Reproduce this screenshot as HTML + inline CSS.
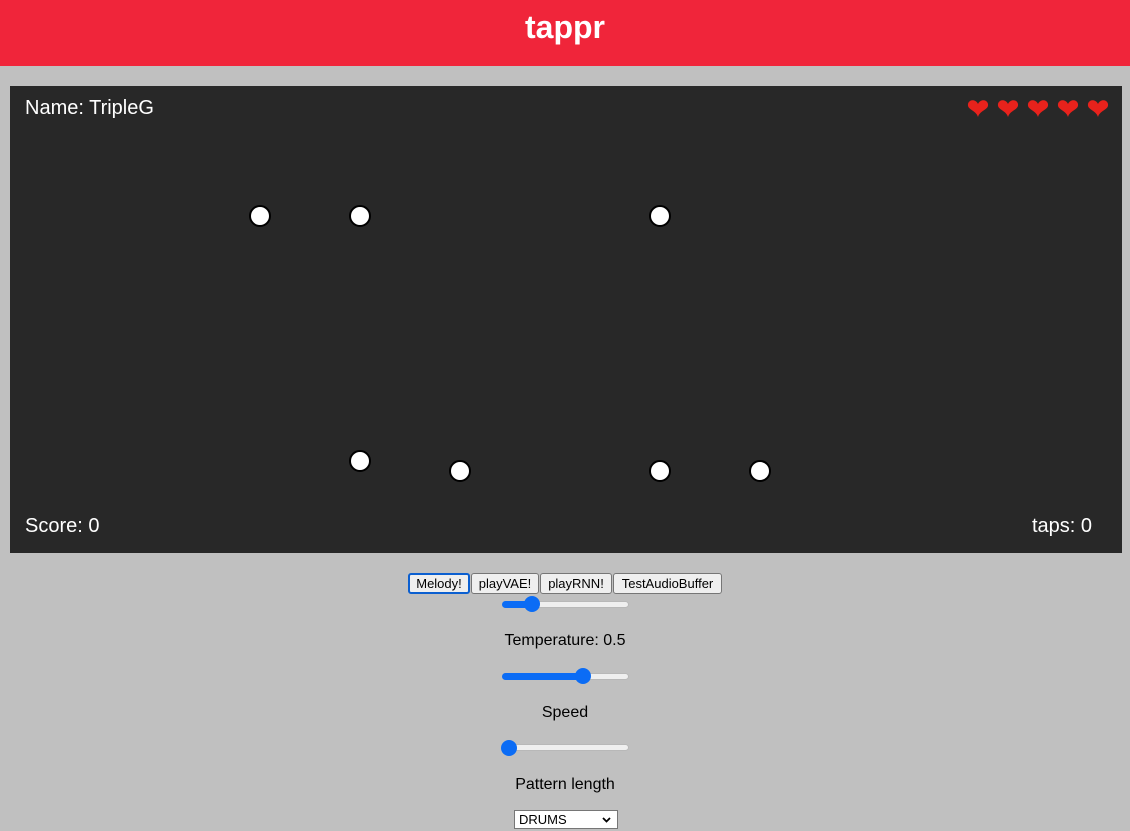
<!DOCTYPE html><html><head><style>
*{margin:0;padding:0;box-sizing:border-box}
body{width:1130px;height:831px;background:#c0c0c0;font-family:"Liberation Sans",sans-serif;position:relative;overflow:hidden}
.a{position:absolute}
.hdr{left:0;top:0;width:1130px;height:66px;background:#f0253a;color:#fff;font-weight:bold;font-size:32px;text-align:center;line-height:54px}
.game{left:10px;top:86px;width:1112px;height:467px;background:#282828}
.t{color:#fff;font-size:20px}
.dot{width:22px;height:22px;border-radius:50%;background:#fff;border:2px solid #000}
.btn{top:573px;height:21px;background:#efefef;border:1px solid #767676;border-radius:3px;font-size:13px;text-align:center;line-height:19px;color:#000}
.track{left:502px;width:127px;height:7px;border-radius:4px;background:#efefef;border:1px solid #b8b8b8}
.fill{left:502px;height:7px;border-radius:4px;background:#0b6cf5}
.th{width:16px;height:16px;border-radius:50%;background:#0b6cf5}
.lbl{width:1130px;left:0;text-align:center;font-size:16px;color:#000}
</style></head><body>
<div class="a hdr">tappr</div>
<div class="a game"></div>
<div class="a t" style="left:25px;top:97px">Name: TripleG</div>
<div class="a t" style="left:25px;top:515px">Score: 0</div>
<div class="a t" style="left:1032px;top:515px">taps: 0</div>
<svg class="a" style="left:960px;top:88px" width="160" height="40">
<defs><path id="h" d="M0,6 C-2,-1 -11,-1 -10,-7 C-9,-12 -2,-12 0,-7 C2,-12 9,-12 10,-7 C11,-1 2,-1 0,6 Z" fill="#e8221c"/></defs>
<use href="#h" x="18" y="23"/><use href="#h" x="48" y="23"/><use href="#h" x="78" y="23"/><use href="#h" x="108" y="23"/><use href="#h" x="138" y="23"/>
</svg>
<div class="a dot" style="left:249px;top:205px"></div>
<div class="a dot" style="left:349px;top:205px"></div>
<div class="a dot" style="left:649px;top:205px"></div>
<div class="a dot" style="left:349px;top:450px"></div>
<div class="a dot" style="left:449px;top:460px"></div>
<div class="a dot" style="left:649px;top:460px"></div>
<div class="a dot" style="left:749px;top:460px"></div>
<div class="a btn" style="left:408px;width:62px;border:2px solid #0b5fd0;line-height:17px">Melody!</div>
<div class="a btn" style="left:471px;width:68px">playVAE!</div>
<div class="a btn" style="left:540px;width:72px">playRNN!</div>
<div class="a btn" style="left:613px;width:109px">TestAudioBuffer</div>
<div class="a track" style="top:601px"></div><div class="a fill" style="top:601px;width:30px"></div><div class="a th" style="left:524px;top:596px"></div>
<div class="a lbl" style="top:632px">Temperature: 0.5</div>
<div class="a track" style="top:673px"></div><div class="a fill" style="top:673px;width:81px"></div><div class="a th" style="left:575px;top:668px"></div>
<div class="a lbl" style="top:704px">Speed</div>
<div class="a track" style="top:744px"></div><div class="a th" style="left:501px;top:740px"></div>
<div class="a lbl" style="top:776px">Pattern length</div>
<div class="a" style="left:514px;top:810px;width:104px;height:19px;background:#fff;border:1px solid #767676;font-size:13px;line-height:17px;padding-left:4px">DRUMS<svg style="position:absolute;right:6px;top:6px" width="9" height="6"><path d="M1,1 L4.5,4.5 L8,1" stroke="#000" stroke-width="1.8" fill="none"/></svg></div>
</body></html>
